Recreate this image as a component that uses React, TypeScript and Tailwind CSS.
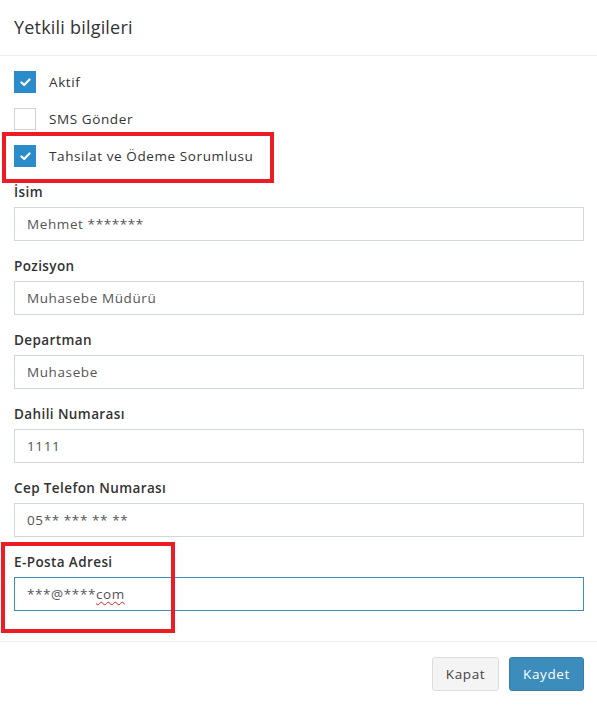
import React from "react";

const font = { fontFamily: '"Open Sans", "Liberation Sans", sans-serif' };

function Check({ checked, label }: { checked: boolean; label: string }) {
  return (
    <div className="flex items-center h-[22px]">
      {checked ? (
        <span className="flex h-[22px] w-[22px] items-center justify-center bg-[#2b8ccb]">
          <svg width="11" height="9" viewBox="0 0 11 9" fill="none">
            <path d="M1.5 4.5L4.2 7L9.5 1.5" stroke="white" strokeWidth="2.2" strokeLinecap="round" strokeLinejoin="round" />
          </svg>
        </span>
      ) : (
        <span className="h-[22px] w-[22px] border border-[#d2d2d2] bg-white" />
      )}
      <span className="ml-[13px] text-[13.5px] tracking-[0.6px] text-[#333]">{label}</span>
    </div>
  );
}

function Field({ label, value, children }: { label: string; value?: string; children?: React.ReactNode }) {
  return (
    <div className="mb-[15px]">
      <label className="mb-[5px] block h-[20px] text-[13.5px] font-semibold leading-[20px] tracking-[0.4px] text-[#333]">{label}</label>
      {children ?? (
        <div className="flex h-[34px] items-center border border-[#d2d6de] px-[12px] text-[13.5px] tracking-[0.6px] text-[#555]">
          {value}
        </div>
      )}
    </div>
  );
}

export default function App() {
  return (
    <div className="relative w-[597px] bg-white" style={font}>
      <div className="flex h-[56px] items-center border-b border-[#f0f0f0] px-[14px]">
        <h4 className="text-[18px] tracking-[0.2px] text-[#333]">Yetkili bilgileri</h4>
      </div>
      <div className="px-[14px] pb-[15px] pt-[15px]">
        <div className="flex flex-col gap-[15px]">
          <Check checked label="Aktif" />
          <Check checked={false} label="SMS Gönder" />
          <Check checked label="Tahsilat ve Ödeme Sorumlusu" />
        </div>
        <div className="mt-[15px] w-[570px]">
          <Field label="İsim" value="Mehmet *******" />
          <Field label="Pozisyon" value="Muhasebe Müdürü" />
          <Field label="Departman" value="Muhasebe" />
          <Field label="Dahili Numarası" value="1111" />
          <Field label="Cep Telefon Numarası" value="05** *** ** **" />
          <Field label="E-Posta Adresi">
            <div className="flex h-[34px] items-center border border-[#3c8dbc] px-[12px] text-[13.5px] tracking-[0.6px] text-[#555]">
              ***@****
              <span className="underline decoration-wavy decoration-[#e02020] decoration-1 underline-offset-2">com</span>
            </div>
          </Field>
        </div>
      </div>
      <div className="flex justify-end gap-[10px] border-t border-[#f0f0f0] px-[13px] py-[15px]">
        <button className="h-[34px] w-[67px] rounded-[3px] border border-[#ddd] bg-[#f4f4f4] text-[13.5px] tracking-[0.6px] text-[#444]">Kapat</button>
        <button className="h-[34px] w-[75px] rounded-[3px] border border-[#367fa9] bg-[#3c8dbc] text-[13.5px] tracking-[0.6px] text-white">Kaydet</button>
      </div>

      <div className="pointer-events-none absolute left-[2px] top-[132px] h-[51px] w-[272px] border-[4px] border-[#ed1c24]" />
      <div className="pointer-events-none absolute left-[1px] top-[542px] h-[91px] w-[174px] border-[4px] border-[#ed1c24]" />
    </div>
  );
}
